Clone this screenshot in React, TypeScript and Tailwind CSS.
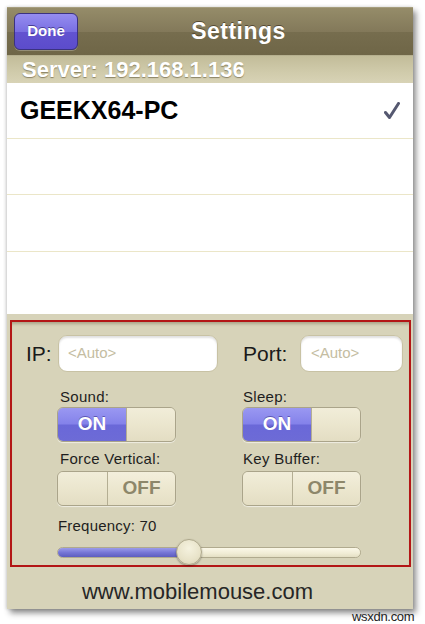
import React from "react";

const font = "font-['Liberation_Sans',Arial,sans-serif]";

function Toggle({ on }: { on: boolean }) {
  return (
    <div className="flex h-[35px] w-[119px] overflow-hidden rounded-[6px] border border-[#aaa48a] shadow-[0_1px_1px_rgba(255,255,255,0.6)]">
      {on ? (
        <>
          <div className="flex w-[68px] items-center justify-center bg-[linear-gradient(180deg,#9a98f2_0%,#8482ea_48%,#6a68d8_52%,#6d6bd6_100%)] text-[19px] font-bold text-white [text-shadow:0_-1px_0_rgba(40,30,120,0.5)]">
            ON
          </div>
          <div className="flex-1 border-l border-[#b4ae93] bg-[linear-gradient(180deg,#f1edd9_0%,#ebe6ce_50%,#e3ddc3_100%)]" />
        </>
      ) : (
        <>
          <div className="w-[50px] border-r border-[#b4ae93] bg-[linear-gradient(180deg,#f1edd9_0%,#ebe6ce_50%,#e3ddc3_100%)]" />
          <div className="flex flex-1 items-center justify-center bg-[linear-gradient(180deg,#f3efdc_0%,#ece7cf_50%,#e5dfc5_100%)] text-[19px] font-bold text-[#8d876a]">
            OFF
          </div>
        </>
      )}
    </div>
  );
}

function Check() {
  return (
    <svg width="16" height="18" viewBox="0 0 16 18">
      <path d="M1.5 10.5 L5.5 15.5 L14.5 1.5" fill="none" stroke="#555870" strokeWidth="3" strokeLinecap="round" strokeLinejoin="round" />
    </svg>
  );
}

export default function App() {
  const rows = ["h-[56px]", "h-[56px]", "h-[57px]"];
  return (
    <div className={`relative h-[624px] w-[425px] overflow-hidden bg-white pl-[7px] pt-[7px] ${font}`}>
      <div className="flex h-[602px] w-[406px] flex-col shadow-[3px_4px_6px_rgba(0,0,0,0.45),-1px_0_3px_rgba(0,0,0,0.15)]">
        {/* nav bar */}
        <div className="flex h-[48px] items-center border-t border-[#a69e7e] bg-[linear-gradient(180deg,#958c69_0%,#83795a_50%,#766d4e_52%,#6f6647_100%)] pl-[7px]">
          <div className="flex h-[37px] w-[64px] items-center justify-center rounded-[6px] border border-[#3b3280] bg-[linear-gradient(180deg,#958df0_0%,#7a6fe2_50%,#6253d0_52%,#5c4ccb_100%)] text-[15px] font-bold text-white shadow-[0_1px_0_rgba(255,255,255,0.25)] [text-shadow:0_-1px_0_rgba(30,20,90,0.6)]">
            Done
          </div>
          <div className="flex-1 pr-[14px] text-center text-[23px] font-bold tracking-[0.5px] text-white [text-shadow:0_-1px_0_rgba(60,50,30,0.7)]">
            Settings
          </div>
        </div>

        {/* server bar */}
        <div className="flex h-[28px] items-center border-t border-[#b6b08f] bg-[linear-gradient(180deg,#c2bc99_0%,#d0cbab_60%,#d8d3b6_100%)] pl-[15px] text-[22px] font-bold text-white [text-shadow:0_1px_1px_rgba(80,70,40,0.55)]">
          Server: 192.168.1.136
        </div>

        {/* list */}
        <div className="flex h-[231px] flex-col bg-white">
          {rows.map((h, i) => (
            <div key={i} className={`${h} flex items-center justify-between border-b border-[#ebe6c8] pl-[13px] pr-[13px]`}>
              {i === 0 && (
                <>
                  <span className="text-[25px] font-bold text-black">GEEKX64-PC</span>
                  <Check />
                </>
              )}
            </div>
          ))}
          <div className="flex-1" />
        </div>

        {/* settings panel */}
        <div className="flex flex-1 flex-col bg-[#d7d3b9] pl-[3px] pr-[2px] pt-[6px]">
          <div className="h-[247px] border-2 border-[#b31616] shadow-[inset_0_4px_3px_-2px_rgba(90,80,50,0.35)]">
            <div className="flex items-center pl-[14px] pt-[13px]">
              <span className="w-[32px] text-[21px] text-[#1a1a1a]">IP:</span>
              <div className="flex h-[37px] w-[160px] items-center rounded-[9px] border border-[#c8c2a4] bg-white pl-[9px] text-[15px] text-[#c4bda2] shadow-[inset_0_2px_2px_rgba(0,0,0,0.12)]">
                &lt;Auto&gt;
              </div>
              <span className="ml-[25px] w-[57px] text-[21px] text-[#1a1a1a]">Port:</span>
              <div className="flex h-[37px] w-[103px] items-center rounded-[9px] border border-[#c8c2a4] bg-white pl-[10px] text-[15px] text-[#c4bda2] shadow-[inset_0_2px_2px_rgba(0,0,0,0.12)]">
                &lt;Auto&gt;
              </div>
            </div>

            <div className="mt-[16px] grid grid-cols-[185px_119px] pl-[45px]">
              <div>
                <div className="pl-[3px] text-[15px] leading-[18px] tracking-[0.3px] text-[#1e1e1e]">Sound:</div>
                <div className="mt-[1px]">
                  <Toggle on />
                </div>
              </div>
              <div>
                <div className="pl-[1px] text-[15px] leading-[18px] tracking-[0.3px] text-[#1e1e1e]">Sleep:</div>
                <div className="mt-[1px]">
                  <Toggle on />
                </div>
              </div>
              <div className="mt-[8px]">
                <div className="pl-[3px] text-[15px] leading-[18px] tracking-[0.3px] text-[#1e1e1e]">Force Vertical:</div>
                <div className="mt-[3px]">
                  <Toggle on={false} />
                </div>
              </div>
              <div className="mt-[8px]">
                <div className="pl-[1px] text-[15px] leading-[18px] tracking-[0.3px] text-[#1e1e1e]">Key Buffer:</div>
                <div className="mt-[3px]">
                  <Toggle on={false} />
                </div>
              </div>
            </div>

            <div className="mt-[11px] pl-[46px] text-[15px] leading-[18px] tracking-[0.2px] text-[#1e1e1e]">Frequency: 70</div>
            <div className="relative ml-[45px] mt-[4px] flex h-[26px] w-[304px] items-center">
              <div className="flex h-[11px] w-full overflow-hidden rounded-full border border-[#b0aa8e]">
                <div className="w-[128px] bg-[linear-gradient(180deg,#9c9cea_0%,#7676d6_50%,#5d5dbf_100%)]" />
                <div className="flex-1 bg-[linear-gradient(180deg,#fbf8e8_0%,#f0ecd5_60%,#e4dfc4_100%)]" />
              </div>
              <div className="absolute left-[119px] top-0 h-[26px] w-[26px] rounded-full border border-[#aea88c] bg-[radial-gradient(circle_at_50%_35%,#f5f2df_0%,#e8e3c9_60%,#d6d0b2_100%)] shadow-[0_1px_2px_rgba(0,0,0,0.35)]" />
            </div>
          </div>
          <div className="flex h-[40px] items-center pr-[26px] pt-[9px] text-center">
            <span className="w-full text-[22px] text-[#262626]">www.mobilemouse.com</span>
          </div>
        </div>
      </div>

      <div className="absolute left-[352px] top-[607px] text-[13px] tracking-[-0.3px] text-[#222]">wsxdn.com</div>
    </div>
  );
}
